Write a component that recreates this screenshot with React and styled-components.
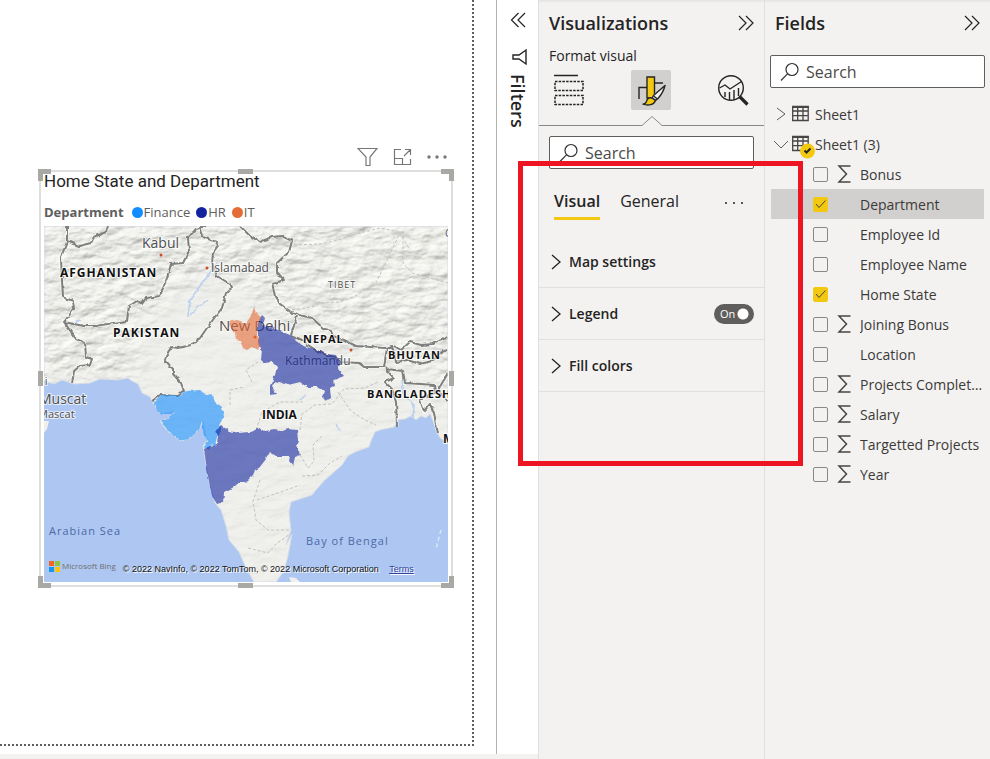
import React, { useState } from "react";
import styled, { createGlobalStyle, css } from "styled-components";

const GlobalStyle = createGlobalStyle`
  * { box-sizing: border-box; }
  body { margin: 0; background: #f3f2f1; color: #252423; font-family: "Open Sans", "Noto Sans", sans-serif; font-size: 14px; }
  button, input { font: inherit; color: inherit; }
  button { border: 0; padding: 0; background: none; cursor: pointer; }
  svg { display: block; }
`;

const Page = styled.div`
  display: flex;
  min-height: 100vh;
`;

const Workspace = styled.main`
  flex: 1;
  min-width: 0;
  display: flex;
  margin-bottom: 5px;
  padding: 0 22px 8px 0;
  background: #fff;
  border-right: 1px solid #b3b2ad;
`;

const ReportPage = styled.div`
  flex: 1;
  min-width: 0;
  border: dotted #605e5c;
  border-width: 0 2px 2px 0;
  padding: 146px 18px 0 38px;
`;

const VisualHeader = styled.div`
  display: flex;
  justify-content: flex-end;
  align-items: center;
  gap: 15px;
  height: 22px;
  padding-right: 7px;
`;

const VisualFrame = styled.section`
  position: relative;
  margin-top: 1px;
  padding: 3px 6px 6px;
  &::before {
    content: "";
    position: absolute;
    inset: 1px;
    border: 2px solid #dededd;
  }
`;

const Handle = styled.span`
  position: absolute;
  width: 13px;
  height: 12px;
  ${(p) => p.$v}: 0;
  ${(p) => p.$h}: 0;
  border: 0 solid #a8a8a4;
  border-${(p) => p.$v}-width: 5px;
  border-${(p) => p.$h}-width: 5px;
  ${(p) => p.$mid && css`
    ${p.$mid}: 50%;
    width: ${p.$mid === "left" ? "15px" : "5px"};
    height: ${p.$mid === "left" ? "5px" : "15px"};
    margin-${p.$mid}: -8px;
    background: #a8a8a4;
    border: 0;
  `}
`;

const VisualTitle = styled.h2`
  position: relative;
  margin: 0;
  font: 400 17px/18px Roboto, sans-serif;
`;

const Legend = styled.div`
  position: relative;
  display: flex;
  align-items: center;
  gap: 6px;
  height: 22px;
  margin: 11px 0 3px;
  color: #605e5c;
  font-size: 13px;
  white-space: nowrap;
`;

const LegendTitle = styled.strong`
  font-weight: 700;
  margin-right: 2px;
`;

const LegendItem = styled.span`
  display: flex;
  align-items: center;
  gap: 1px;
  &::before {
    content: "";
    width: 11px;
    height: 11px;
    border-radius: 50%;
    background: ${(p) => p.$color};
  }
`;

const MapArea = styled.div`
  position: relative;
  > svg { width: 100%; height: auto; }
`;

const MapCredits = styled.div`
  position: absolute;
  left: 5px;
  bottom: 3px;
  display: flex;
  align-items: center;
  gap: 7px;
  white-space: nowrap;
  font: 8px/14px "Open Sans", sans-serif;
  color: #111;
  text-shadow: 1px 1px #fff;
  a { color: #3341a0; }
`;

const BingMark = styled.span`
  display: flex;
  align-items: center;
  gap: 2px;
  margin-bottom: 6px;
  color: #706e6c;
  text-shadow: none;
`;

const Copyright = styled.span`
  font: 9px/14px "Liberation Sans", sans-serif;
  a { margin-left: 8px; }
`;

const FiltersRail = styled.aside`
  flex: 0 0 41px;
  margin-bottom: 5px;
  padding-top: 12px;
  background: #fff;
  display: flex;
  flex-direction: column;
  align-items: center;
  gap: 20px;
`;

const FiltersTitle = styled.h2`
  margin: -12px 0 0;
  writing-mode: vertical-rl;
  font-size: 18px;
  font-weight: 600;
  line-height: 20px;
`;

const Panel = styled.aside`
  position: relative;
  flex: 0 0 226px;
  min-width: 0;
  background: #f3f2f1;
  border-left: 1px solid #e1dfdd;
`;

const PanelHeader = styled.header`
  display: flex;
  align-items: center;
  justify-content: space-between;
  height: 46px;
  padding: 0 10px;
  background: linear-gradient(#e4e3e2, #f3f2f1 3px);
  h2 { margin: 0; font-size: 18px; line-height: 24px; font-weight: 600; }
`;

const Subtitle = styled.h3`
  margin: 0 10px 4px;
  font-size: 14px;
  line-height: 20px;
  font-weight: 500;
`;

const ModeBar = styled.div`
  display: flex;
  justify-content: space-between;
  padding: 0 11px 0 10px;
`;

const ModeButton = styled.button`
  display: grid;
  place-items: center;
  width: 40px;
  height: 40px;
  border-radius: 2px;
  background: ${(p) => (p.$active ? "#d2d0ce" : "transparent")};
`;

const Pointer = styled.div`
  display: flex;
  align-items: flex-end;
  height: 16px;
  margin-bottom: 10px;
  &::before, &::after { content: ""; flex: 1; border-bottom: 1px solid #8a8886; }
`;

const SearchLabel = styled.label`
  display: flex;
  align-items: center;
  gap: 6px;
  height: 33px;
  margin: ${(p) => p.$margin};
  padding-left: 9px;
  border: 1px solid #605e5c;
  border-radius: 2px;
  background: #fff;
  input {
    flex: 1;
    min-width: 0;
    padding: 0;
    border: 0;
    outline: 0;
    background: none;
    font-size: 16px;
  }
  input::placeholder { color: #4b4a48; opacity: 1; }
`;

const Tabs = styled.div`
  display: flex;
  align-items: center;
  gap: 20px;
  height: 35px;
  margin: 16px 20px 16px 15px;
  > :last-child { margin-left: auto; }
`;

const Tab = styled.button`
  height: 35px;
  font-size: 16px;
  font-weight: ${(p) => (p.$active ? 600 : 400)};
  border-bottom: 3px solid ${(p) => (p.$active ? "#f2c811" : "transparent")};
`;

const Card = styled.div`
  display: flex;
  align-items: center;
  justify-content: space-between;
  height: 52px;
  padding: 0 10px 0 12px;
  border-bottom: 1px solid #e1dfdd;
`;

const CardButton = styled.button`
  display: flex;
  align-items: center;
  gap: 7px;
  font-weight: 600;
`;

const Toggle = styled.label`
  display: grid;
  align-items: center;
  width: 40px;
  height: 20px;
  color: #fff;
  font-size: 11px;
  > * { grid-area: 1 / 1; }
  span { padding-left: 6px; pointer-events: none; }
  input {
    appearance: none;
    width: 40px;
    height: 20px;
    margin: 0;
    border-radius: 10px;
    background: radial-gradient(circle at 29px 10px, #fff 5px, #605e5c 6px);
  }
`;

const Highlight = styled.div`
  position: absolute;
  z-index: 2;
  top: 161px;
  left: -21px;
  width: 285px;
  height: 305px;
  border: 5px solid #ed1522;
  pointer-events: none;
`;

const FieldTree = styled.ul`
  list-style: none;
  margin: 11px 6px 0;
  padding: 0;
  color: #3b3a39;
`;

const TableRow = styled.button`
  display: flex;
  align-items: center;
  width: 100%;
  height: 30px;
  padding-left: 2px;
  gap: 3px;
`;

const TableMark = styled.span`
  flex: 0 0 20px;
  min-width: 0;
`;

const FieldRow = styled.label`
  display: grid;
  grid-template-columns: 15px 14px minmax(0, 1fr);
  column-gap: 9px;
  align-items: center;
  height: 30px;
  padding-left: 42px;
  background: ${(p) => (p.$selected ? "#d2d0ce" : "transparent")};
`;

const FieldName = styled.span`
  overflow: hidden;
  text-overflow: ellipsis;
  white-space: nowrap;
`;

const CheckWrap = styled.span`
  display: grid;
  place-items: center;
  > svg { pointer-events: none; }
  > * { grid-area: 1 / 1; }
  input {
    appearance: none;
    width: 15px;
    height: 15px;
    margin: 0;
    border: 1px solid #8a8886;
    border-radius: 2px;
  }
  input:checked { background: #f2c811; border-color: #f2c811; }
`;

const Icon = ({ w, h, d, sw = 1, stroke = "#252423", children }) => (
  <svg width={w} height={h} viewBox={`0 0 ${w} ${h}`} fill="none" stroke={stroke} strokeWidth={sw} aria-hidden="true">
    {d && <path d={d} />}
    {children}
  </svg>
);

const SearchIcon = () => (
  <Icon w={20} h={20} stroke="#323130" sw={1.2}>
    <circle cx="12" cy="7.5" r="6" />
    <path d="M7.7 11.7 1 18.5" />
  </Icon>
);

const Dots = ({ color, r }) => (
  <Icon w={20} h={4} stroke="none">
    <g fill={color}><circle cx="2" cy="2" r={r} /><circle cx="10" cy="2" r={r} /><circle cx="18" cy="2" r={r} /></g>
  </Icon>
);

const Collapse = ({ left }) => (
  <Icon w={16} h={16} sw={1.2} d={left ? "M8.5 1 1.5 8l7 7M15 1 8 8l7 7" : "M1 1l7 7-7 7M8 1l7 7-7 7"} />
);

const BuildIcon = () => (
  <Icon w={30} h={32} sw={1.5}>
    <path d="M0 1.500h24" />
    <path strokeDasharray="2.500 1.200" d="M1 7.500h28v9H1zM1 21.500h28v9H1z" />
  </Icon>
);

const FormatIcon = () => (
  <Icon w={30} h={32} sw={1.4}>
    <path d="M3 25V13.500h8M19 9h8" />
    <path fill="#f2c811" d="M11 3h7.500v21H11z" />
    <path stroke="#d2d0ce" strokeWidth="4" d="M28 13 18 23l-2 1" />
    <path fill="#f3f2f1" strokeLinejoin="round" d="M29 11.500 17.500 21.500 16 24l3.500 2.500 2.500-2C25 21 28 16 29 11.500z" />
    <path d="m17.500 22 4 3" />
    <path fill="#f2c811" strokeLinejoin="round" d="M15.500 24c-3-.5-4.500 1-5 3.500-.5 1.500-1.500 2.500-3.500 2.700 5 1.500 11 1 12.500-4z" />
  </Icon>
);

const AnalyticsIcon = () => (
  <Icon w={32} h={32} sw={1.4}>
    <circle cx="14" cy="14" r="12.300" />
    <path d="m2.500 14 5.500-3 5 4 11.500-7.500M8 18v5M12.500 18v8M17 16v10M21.500 14v8" />
    <path d="m22.500 22.500 8 8" strokeWidth="3.200" />
  </Icon>
);

const TableIcon = ({ marked }) => (
  <svg width="25" height="30" viewBox="0 0 25 30" fill="none" stroke="#484644" aria-hidden="true">
    <path d="M.7 7.500h15.500v14H.7zM.7 12h15.500M.7 16.700h15.500M5.700 8v13.500M11 8v13.500" strokeWidth="1.300" />
    <path d="M0 8h16.800" strokeWidth="2" />
    {marked && (
      <g>
        <circle cx="15.500" cy="22" r="7.500" fill="#f2c811" stroke="none" />
        <path d="m12.500 21.500 2 2 4-4" stroke="#252423" strokeWidth="2" />
      </g>
    )}
  </svg>
);

const Sigma = () => <Icon w={14} h={18} sw={1.5} stroke="#484644" d="M13.500 1H2l7.500 8L2 17h11.500" />;

const land = "M44 226H448V443L440 438 437 432 433 421 430 414 426 418 421 416 416 420 411 416 405 419 398 420 394 427 380 430 375 432 371 441 369 447 355 452 348 456 342 465 325 480 316 490 312 495 303 498 291 502 289 512 291 530 286 545 292 534 288 556 284 571 276 582H254L246 568 239 552 229 540 226 526 221 510 215 503 209 481 205 458 203 446 207 440 203 421 199 430 190 438 181 441 167 431 160 421 169 419 176 411 160 414 153 403 150 397 142 393 138 384 132 381 128 378 118 380 100 379 90 383 74 384 62 380 54 384 44 381z";
const gujarat = "M154 403 161 395 180 396 186 391 200 390 206 395 212 394 215 402 222 407 224 417 219 425 222 430 217 438 215 446 211 444 209 450 204 447 208 441 204 436 202 421 199 430 190 438 181 441 167 431 160 421 169 419 176 411 171 414 160 414 155 408z";
const maharashtra = "M204 449 210 446 217 444 218 437 216 430 222 426 229 431 239 433 250 432 260 428 265 431 275 429 280 432 288 429 297 430 298 440 296 445 300 455 295 457 293 466 289 461 290 456 276 456 270 452 266 459 259 468 255 470 253 475 245 483 237 483 234 488 224 493 223 502 217 504 212 496 208 476z";
const up = "M258 322 262 315 265 318 263 325 280 331 290 335 303 346 315 349 325 354 336 355 341 362 338 369 344 376 334 380 335 386 330 388 331 398 326 401 322 397 324 391 318 387 307 387 300 382 288 385 275 381 272 387 277 394 270 395 270 386 275 375 277 367 272 362 265 363 261 360 262 351 258 344z";
const haryana = "M254 307 256 313 261 317 258 326 257 336 261 343 258 350 253 347 247 350 243 348 240 341 236 340 235 333 228 322 237 320 246 323 251 316z";
const borders = [
  "M67 226 67 242 61 257 62 280 63 297 73 301 74 309 64 322 76 339 85 343 86 357 92 359 90 365 80 366 74 371 72 383",
  "M64 322 84 326 96 326 113 323 127 321 129 306 137 301 142 304 146 298 160 296 167 278 171 264 183 263 189 251 188 238 196 229 206 226",
  "M67 241 79 246 91 243 94 237 106 232 108 226",
  "M200 226 203 237 216 242 218 247 213 253 212 263 217 276 230 284 233 288 226 293 222 308 215 317 207 328 200 338 191 345 178 348 171 347 165 360 173 369 173 374 181 383 184 391 178 396 160 395 152 401",
  "M240 226 250 236 260 242 272 237 282 236 292 241 289 252 277 263 277 272 284 280 272 284 275 296 280 304 291 312 299 315 312 318 324 329 331 331 333 336 344 340 356 346 370 347 385 348 393 346",
  "M297 316 291 335 302 340 308 345 319 352 330 356 342 362 359 363 364 367 384 367 387 348 392 346 394 353 396 362 407 360 420 364 432 361 440 353 447 350",
  "M394 346 401 350 410 342 421 345 433 344 448 337M386 367 390 374 394 378 385 382 392 389 396 402 397 426M386 369 403 371 405 383 421 384 434 385 435 393 426 396 420 400 424 411 430 404 434 413 438 434M448 373 438 390 448 401",
];
const states = "M292 310 312 307 320 303 340 302 355 296 375 285 400 233 410 250M294 245 320 244 338 240 356 234 380 228 403 233 403 263 412 273 448 283M252 382 246 370 258 362M230 405 230 390 244 387M256 430 262 412 280 402 303 402M300 430 302 414 315 405 332 404 344 389 365 388 378 382M300 455 308 468 314 461 313 445 322 436M260 480 253 501 256 520 268 530 290 530M257 500 278 493 300 485M248 548 268 553 276 544 290 534M338 392 351 411 365 420 376 425M302 476 318 475 330 463 342 456";

function IndiaMap() {
  return (
    <svg viewBox="44 226 404 356" role="img" aria-label="Map of home state by department">
      <defs>
        <filter id="relief" x="0" y="0" width="100%" height="100%" colorInterpolationFilters="sRGB">
          <feTurbulence type="fractalNoise" baseFrequency="0.045 0.09" numOctaves="4" seed="8" />
          <feDiffuseLighting surfaceScale="2.6" lightingColor="#fff" result="light">
            <feDistantLight azimuth="235" elevation="62" />
          </feDiffuseLighting>
          <feColorMatrix type="matrix" values=".7 0 0 0 .3 0 .7 0 0 .3 0 0 .7 0 .285 0 0 0 1 0" />
        </filter>
        <clipPath id="land"><path d={land} /></clipPath>
        <filter id="soft"><feGaussianBlur stdDeviation="12" /></filter>
        <filter id="rough" x="-5%" y="-5%" width="110%" height="110%">
          <feTurbulence type="fractalNoise" baseFrequency="0.2" numOctaves="1" seed="3" />
          <feDisplacementMap in="SourceGraphic" scale="4" xChannelSelector="R" yChannelSelector="G" />
        </filter>
        <mask id="mountains">
          <path fill="#fff" filter="url(#soft)" d="M20 200H470V400L440 400 440 367 384 363 340 350 300 332 265 308 220 275 175 285 140 330 135 380H20z" />
        </mask>
      </defs>
      <path fill="#adc7f2" d="M44 226h404v356H44z" />
      <path d={land} fill="#efefec" />
      <path d="M44 421 49 421 47 429 44 433zM289 577 296 578 300 582H291z" fill="#efefec" />
      <g clipPath="url(#land)">
        <path filter="url(#relief)" d="M44 226h404v356H44z" opacity=".15" />
        <g mask="url(#mountains)"><path filter="url(#relief)" d="M44 226h404v200H44z" opacity=".8" /></g>
      </g>
      <path d={land} fill="none" stroke="#d5dce6" />
      <path d="M218 262 200 286 190 300 188 316M207 300 199 307 190 315M402 380 404 395 414 405 413 419M80 320 72 324M300 400 306 395M340 431 336 424" fill="none" stroke="#bcd0f0" strokeWidth="1.500" filter="url(#rough)" />
      <path d={states} fill="none" stroke="#c3c2bf" strokeDasharray="3 2" />
      <g filter="url(#rough)">
        <g fill="none" stroke="#fff" strokeOpacity=".4" strokeWidth="4">{borders.map((d) => <path key={d} d={d} />)}</g>
        <g fill="none" stroke="#7f7f7d" strokeWidth="2" strokeLinejoin="round">{borders.map((d) => <path key={d} d={d} />)}</g>
      </g>
      <g fill="#cf4c28"><circle cx="161" cy="255" r="1.500" /><circle cx="207" cy="268" r="1.500" /><circle cx="255" cy="337" r="1.500" /><circle cx="351" cy="350" r="1.500" /></g>
      <g fontFamily="Open Sans, sans-serif" fill="#4e4e4e" stroke="#fff" strokeOpacity=".7" strokeWidth="2" paintOrder="stroke" fontSize="12">
        <text x="142" y="248" fontSize="14">Kabul</text>
        <text x="211" y="272">Islamabad</text>
        <text x="219" y="331" fontSize="15">New Delhi</text>
        <text x="285" y="365">Kathmandu</text>
        <text x="328" y="288" fontSize="9" letterSpacing="1">TIBET</text>
        <text x="39" y="404" fontSize="14">Muscat</text>
        <text x="38" y="418" fontSize="11">Mascat</text>
        <text x="38" y="385" fontSize="11">bi</text>
        <text x="445" y="237" fontSize="10">C</text>
      </g>
      <g fontFamily="Open Sans, sans-serif" fontWeight="700" fill="#111" stroke="#fff" strokeOpacity=".8" strokeWidth="2" paintOrder="stroke" fontSize="12" letterSpacing="1">
        <text x="60" y="277">AFGHANISTAN</text>
        <text x="113" y="337">PAKISTAN</text>
        <text x="303" y="343" fontSize="11">NEPAL</text>
        <text x="388" y="359" fontSize="11">BHUTAN</text>
        <text x="367" y="398" fontSize="11">BANGLADESH</text>
        <text x="262" y="419" letterSpacing="0">INDIA</text>
        <text x="443" y="443">M</text>
      </g>
      <g fontFamily="Open Sans, sans-serif" fill="#5068a5" fontSize="11" letterSpacing="1">
        <text x="49" y="535">Arabian Sea</text>
        <text x="306" y="545">Bay of Bengal</text>
      </g>
      <g fillOpacity=".6" filter="url(#rough)">
        <path d={gujarat} fill="#118dff" />
        <path d={maharashtra} fill="#12239e" />
        <path d={up} fill="#12239e" />
        <path d={haryana} fill="#e66c37" />
      </g>
      <path d="M441 530 438 541 436 550" fill="none" stroke="#dce5f3" strokeWidth="1.500" strokeDasharray="4 3" />
    </svg>
  );
}

const fields = [
  ["Bonus", true], ["Department", false], ["Employee Id", false], ["Employee Name", false], ["Home State", false],
  ["Joining Bonus", true], ["Location", false], ["Projects Completed", true], ["Salary", true],
  ["Targetted Projects", true], ["Year", true],
];

function Search({ margin }) {
  return (
    <SearchLabel $margin={margin}>
      <SearchIcon />
      <input type="text" placeholder="Search" aria-label="Search" />
    </SearchLabel>
  );
}

function Field({ name, numeric }) {
  const [checked, setChecked] = useState(name === "Department" || name === "Home State");
  return (
    <FieldRow $selected={name === "Department"}>
      <CheckWrap>
        <input type="checkbox" checked={checked} onChange={(e) => setChecked(e.target.checked)} />
        {checked && <Icon w={11} h={9} d="m1 4 3 3.500 6.500-7" stroke="#484644" />}
      </CheckWrap>
      {numeric ? <Sigma /> : <span />}
      <FieldName>{name}</FieldName>
    </FieldRow>
  );
}

export default function App() {
  return (
    <Page>
      <GlobalStyle />
      <Workspace>
        <ReportPage>
          <VisualHeader>
            <button aria-label="Filters on this visual"><Icon w={21} h={20} stroke="#797775" sw={1.2} d="M1 1.500h19l-7 8.500v8.500H9V10z" /></button>
            <button aria-label="Focus mode"><Icon w={19} h={18} stroke="#797775" d="M8 1.500H1.500v15h16V11M12 1.500h5.500V7M17.500 1.500 11 8M1.500 10.500h8v6" sw={1.2} /></button>
            <button aria-label="More options"><Dots color="#797775" r={1.7} /></button>
          </VisualHeader>
          <VisualFrame>
            <VisualTitle>Home State and Department</VisualTitle>
            <Legend>
              <LegendTitle>Department</LegendTitle>
              <LegendItem $color="#118dff">Finance</LegendItem>
              <LegendItem $color="#12239e">HR</LegendItem>
              <LegendItem $color="#e66c37">IT</LegendItem>
            </Legend>
            <MapArea>
              <IndiaMap />
              <MapCredits>
                <BingMark>
                  <svg width="11" height="11" viewBox="0 0 11 11" aria-hidden="true">
                    <path fill="#f1652a" d="M0 0h5v5H0z" /><path fill="#8cc63f" d="M6 0h5v5H6z" />
                    <path fill="#1296f3" d="M0 6h5v5H0z" /><path fill="#ffc20a" d="M6 6h5v5H6z" />
                  </svg>
                  Microsoft Bing
                </BingMark>
                <Copyright>
                  © 2022 NavInfo, © 2022 TomTom, © 2022 Microsoft Corporation <a href="#terms">Terms</a>
                </Copyright>
              </MapCredits>
            </MapArea>
            <Handle $v="top" $h="left" /><Handle $v="top" $h="right" />
            <Handle $v="bottom" $h="left" /><Handle $v="bottom" $h="right" />
            <Handle $v="top" $h="right" $mid="left" /><Handle $v="bottom" $h="right" $mid="left" />
            <Handle $v="bottom" $h="left" $mid="top" /><Handle $v="bottom" $h="right" $mid="top" />
          </VisualFrame>
        </ReportPage>
      </Workspace>

      <FiltersRail>
        <button aria-label="Expand filters"><Collapse left /></button>
        <Icon w={18} h={18} sw={1.4} d="M17 2v14l-7-5H4V7h6z" />
        <FiltersTitle>Filters</FiltersTitle>
      </FiltersRail>

      <Panel>
        <PanelHeader><h2>Visualizations</h2><button aria-label="Collapse visualizations"><Collapse /></button></PanelHeader>
        <Subtitle>Format visual</Subtitle>
        <ModeBar>
          <ModeButton aria-label="Build visual"><BuildIcon /></ModeButton>
          <ModeButton $active aria-label="Format visual"><FormatIcon /></ModeButton>
          <ModeButton aria-label="Analytics"><AnalyticsIcon /></ModeButton>
        </ModeBar>
        <Pointer><Icon w={20} h={10} stroke="#8a8886" d="M0 9.500 10 .5l10 9" /></Pointer>
        <Search margin="0 10px" />
        <Tabs>
          <Tab $active>Visual</Tab>
          <Tab>General</Tab>
          <button aria-label="More format options"><Dots color="#323130" r={1.1} /></button>
        </Tabs>
        {["Map settings", "Legend", "Fill colors"].map((name) => (
          <Card key={name}>
            <CardButton><Icon w={11} h={16} d="m1 1 8 7-8 7" sw={1.3} />{name}</CardButton>
            {name === "Legend" && (
              <Toggle><input type="checkbox" role="switch" defaultChecked aria-label="Legend" /><span>On</span></Toggle>
            )}
          </Card>
        ))}
        <Highlight />
      </Panel>

      <Panel>
        <PanelHeader><h2>Fields</h2><button aria-label="Collapse fields"><Collapse /></button></PanelHeader>
        <Search margin="9px 5px 0" />
        <FieldTree>
          <li><TableRow><Icon w={16} h={16} d="m4 2 8 6-8 6" stroke="#605e5c" /><TableMark><TableIcon /></TableMark>Sheet1</TableRow></li>
          <li>
            <TableRow aria-expanded="true"><Icon w={16} h={16} d="m1 5 7 7 7-7" stroke="#605e5c" /><TableMark><TableIcon marked /></TableMark>Sheet1 (3)</TableRow>
            {fields.map(([name, numeric]) => <Field key={name} name={name} numeric={numeric} />)}
          </li>
        </FieldTree>
      </Panel>
    </Page>
  );
}
